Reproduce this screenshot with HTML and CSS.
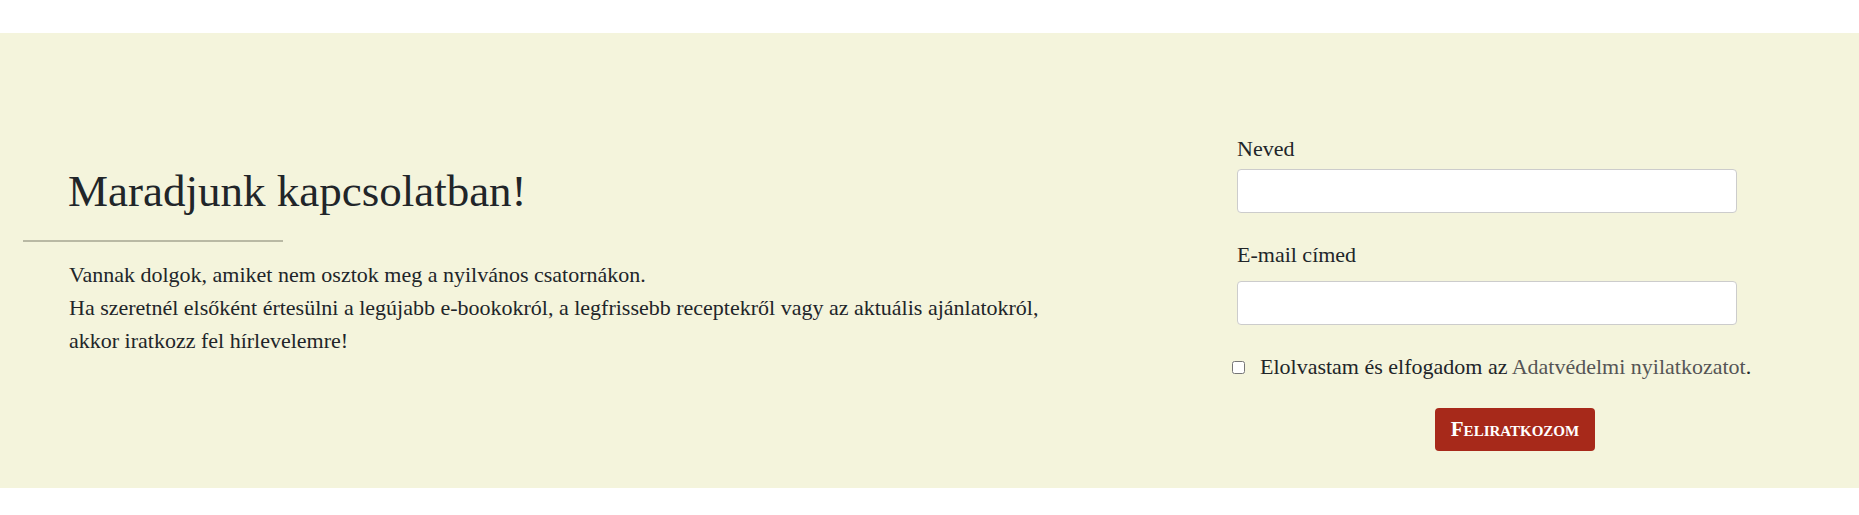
FILE: index.html
```html
<!DOCTYPE html>
<html lang="hu">
<head>
<meta charset="utf-8">
<title>Hírlevél</title>
<link rel="stylesheet" href="styles.css">
</head>
<body>
<div class="top-space"></div>
<section class="newsletter">
  <div class="intro">
    <h2 class="intro-title">Maradjunk kapcsolatban!</h2>
    <div class="intro-rule"></div>
    <p class="intro-text">Vannak dolgok, amiket nem osztok meg a nyilvános csatornákon.<br>Ha szeretnél elsőként értesülni a legújabb e-bookokról, a legfrissebb receptekről vagy az aktuális ajánlatokról,<br>akkor iratkozz fel hírlevelemre!</p>
  </div>
  <form class="signup">
    <div class="field">
      <label class="field-label" for="name">Neved</label>
      <input class="field-input" id="name" type="text">
    </div>
    <div class="field">
      <label class="field-label field-label-spaced" for="email">E-mail címed</label>
      <input class="field-input" id="email" type="email">
    </div>
    <div class="consent">
      <input class="consent-box" id="consent" type="checkbox">
      <label class="consent-label" for="consent">Elolvastam és elfogadom az <a class="consent-link" href="#">Adatvédelmi nyilatkozatot</a>.</label>
    </div>
    <div class="actions">
      <button class="submit" type="button">Feliratkozom</button>
    </div>
  </form>
</section>
<div class="bottom-space"></div>
</body>
</html>
```
FILE: styles.css
```css
* { box-sizing: border-box; }
html, body { margin: 0; padding: 0; background: #ffffff; }
body {
  font-family: "Liberation Serif", "Times New Roman", serif;
  color: #212529;
  font-size: 22px;
  line-height: 1.5;
}
.top-space { height: 33px; }
.newsletter {
  display: flex;
  height: 455px;
  background: #f4f4dc;
}
.intro {
  flex: 1;
  display: flex;
  flex-direction: column;
  justify-content: center;
  padding-left: 23px;
}
.intro-title {
  margin: 0;
  padding-left: 45px;
  font-size: 45px;
  font-weight: 400;
  line-height: 1.2;
  color: #212529;
}
.intro-rule {
  width: 260px;
  height: 2px;
  margin-top: 22px;
  background: #b9b9a4;
}
.intro-text {
  margin: 16px 0 0;
  padding-left: 46px;
  font-size: 22px;
  line-height: 33px;
}
.signup {
  width: 556px;
  margin-right: 66px;
  padding-top: 99px;
  display: flex;
  flex-direction: column;
}
.field { display: flex; flex-direction: column; }
.field + .field { margin-top: 25px; }
.field-label {
  font-size: 22px;
  line-height: 33px;
  margin-bottom: 4px;
}
.field-label-spaced { margin-bottom: 10px; }
.field-input {
  width: 90%;
  height: 44px;
  border: 1px solid #cccccc;
  border-radius: 4px;
  background: #ffffff;
  font: inherit;
  padding: 4px 10px;
}
.consent {
  display: flex;
  align-items: center;
  margin-top: 25px;
  margin-left: -5px;
  line-height: 33px;
}
.consent-box {
  width: 13px;
  height: 13px;
  margin: 2px 15px 0 0;
}
.consent-label { font-size: 22px; }
.consent-link { color: #555555; text-decoration: none; }
.actions {
  display: flex;
  justify-content: center;
  margin-top: 25px;
}
.submit {
  font-family: "Liberation Serif", "Times New Roman", serif;
  font-variant: small-caps;
  font-weight: 700;
  font-size: 21px;
  line-height: 31px;
  color: #ffffff;
  background: #a7291a;
  border: none;
  border-radius: 4px;
  padding: 6px 16px;
}
.bottom-space { height: 27px; }
```
